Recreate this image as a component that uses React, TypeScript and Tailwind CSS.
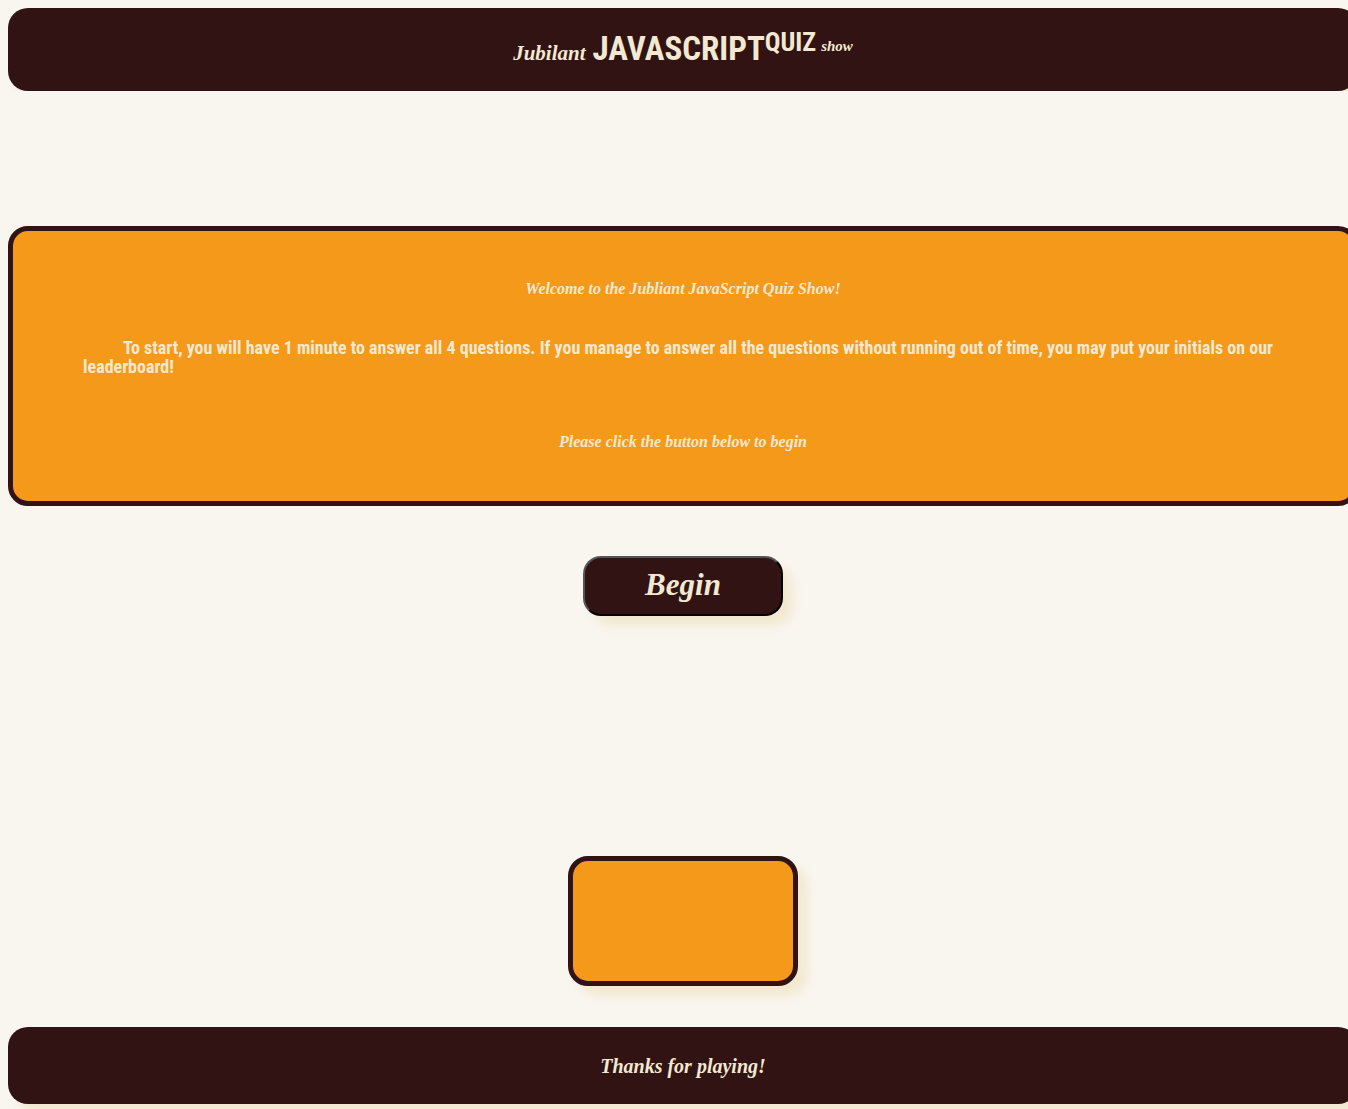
const script = "font-['Liberation_Serif',cursive] font-bold italic";
const condensed = "font-['Roboto_Condensed',sans-serif] font-bold";

function Header() {
  return (
    <header className="flex h-[83px] items-center justify-center rounded-[20px] bg-[#311313] pt-1 shadow-[10px_10px_10px_#f3e9d2]">
      <h1 className="whitespace-nowrap leading-10">
        <span className={`${script} mr-[7px] text-[21px]`}>Jubilant</span>
        <span className={`${condensed} text-[33px]`}>JAVASCRIPT</span>
        <span className={`${condensed} align-[9px] text-[26px] leading-none`}>QUIZ</span>
        <span className={`${script} ml-[5px] align-[9px] text-[15px] leading-none`}>show</span>
      </h1>
    </header>
  );
}

function Intro() {
  return (
    <section className="flex flex-col rounded-[20px] border-[5px] border-[#311313] bg-[#f5991b] px-[70px] pt-12 pb-[49px]">
      <h2 className={`${script} text-center text-base leading-5`}>
        Welcome to the Jubliant JavaScript Quiz Show!
      </h2>
      <p className={`${condensed} mt-[39px] indent-10 text-lg leading-[19px]`}>
        To start, you will have 1 minute to answer all 4 questions. If you manage to answer all the
        questions without running out of time, you may put your initials on our leaderboard!
      </p>
      <h2 className={`${script} mt-14 text-center text-base leading-5`}>
        Please click the button below to begin
      </h2>
    </section>
  );
}

export default function App() {
  return (
    <div className="overflow-hidden bg-[#f9f6f0] text-[#f3e9d2]">
      <div className="-mr-2.5 ml-2 flex min-h-screen flex-col pt-2 pb-[5px]">
        <Header />
        <main className="relative -ml-2 flex grow flex-col bg-[#f9f6f0] pt-[135px] pl-2">
          <Intro />
          <button
            type="button"
            className={`${script} mt-[50px] h-[60px] w-[200px] self-center rounded-[18px] border-2 border-t-[#555] border-r-black border-b-black border-l-[#555] bg-[#311313] pb-1 text-[31px] leading-none shadow-[10px_10px_10px_#f3e9d2]`}
          >
            Begin
          </button>
          <div className="mt-60 mb-[41px] h-[130px] w-[230px] self-center rounded-[20px] border-[5px] border-[#311313] bg-[#f5991b] shadow-[10px_10px_10px_#f3e9d2]" />
        </main>
        <footer className="relative flex h-[77px] items-center justify-center rounded-[20px] bg-[#311313] shadow-[10px_10px_10px_#f3e9d2]">
          <h2 className={`${script} text-xl`}>Thanks for playing!</h2>
        </footer>
      </div>
    </div>
  );
}
